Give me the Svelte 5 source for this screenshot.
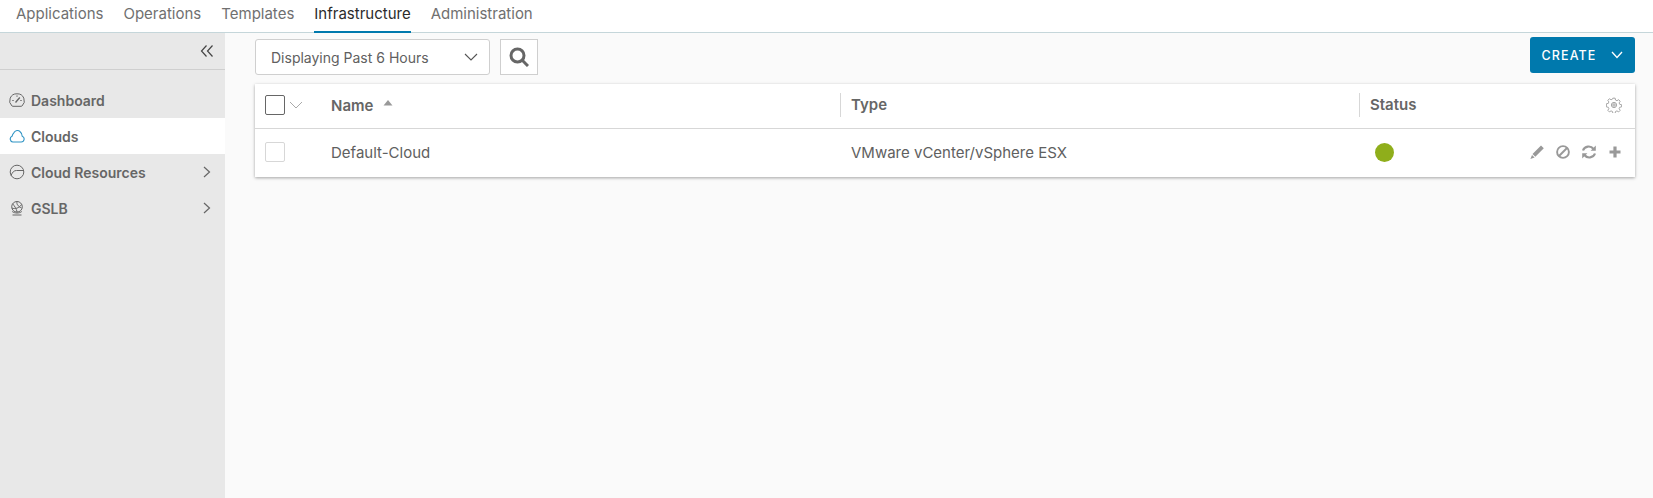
<script>
	const tabs = ['Applications', 'Operations', 'Templates', 'Infrastructure', 'Administration'];
	const active = 'Infrastructure';
</script>

<div class="page">
	<nav class="tabs">
		{#each tabs as tab}
			<span class="tab" class:active={tab === active}>{tab}</span>
		{/each}
	</nav>

	<div class="body">
		<aside class="sidebar">
			<div class="collapse">
				<svg width="14" height="14" viewBox="0 0 14 14" fill="none" stroke="#444" stroke-width="1.2">
					<path d="M6.500 1.500 1.500 7l5 5.500M12.500 1.500 7.500 7l5 5.500" />
				</svg>
			</div>
			<ul class="menu">
				<li class="item">
					<svg class="ico" width="16" height="16" viewBox="0 0 16 16" fill="none" stroke="#666" stroke-width="1">
						<path d="M3 14A7 7 0 0 1 8 1.800 7 7 0 0 1 13 14a1.500 1.500 0 0 1-1 .3H4a1.500 1.500 0 0 1-1-.3z" stroke-linejoin="round" />
						<path d="M6.500 10.500 10.800 5.500" stroke-width="1.300" />
						<path d="M8 3.400v1.400M3.300 8.500h1.400M11.300 8.500h1.400" />
					</svg>
					<span>Dashboard</span>
				</li>
				<li class="item current">
					<svg class="ico" width="16" height="16" viewBox="0 0 16 16" fill="none" stroke="#2e93c4" stroke-width="1.100">
						<path d="M3.800 14h8.400a3 3 0 0 0 1-5.800c0-2-.9-3.600-2.100-4.500a3.600 3.600 0 0 0-5.900.6C4.100 5.500 3.300 7 3 8.300A3 3 0 0 0 3.800 14z" stroke-linejoin="round" />
					</svg>
					<span>Clouds</span>
				</li>
				<li class="item">
					<svg class="ico" width="16" height="16" viewBox="0 0 16 16" fill="none" stroke="#666" stroke-width="1">
						<circle cx="8" cy="8" r="6.800" />
						<path d="M2 11.500C3.500 8 5 6.500 7.500 6.500H14.500" />
					</svg>
					<span>Cloud Resources</span>
					<svg class="more" width="10" height="12" viewBox="0 0 10 12" fill="none" stroke="#666" stroke-width="1.200">
						<path d="M2 1l5.500 5L2 11" />
					</svg>
				</li>
				<li class="item">
					<svg class="ico" width="16" height="16" viewBox="0 0 16 16" fill="none" stroke="#666" stroke-width="1">
						<circle cx="8" cy="6.800" r="5.300" />
						<path d="M3.600 3.800C5.500 6 7 8 8.200 12M3 8.200C6 9 10 8.500 12.500 4.500M8 1.500C7.500 4 8.500 6 12.500 8" />
						<path d="M3.200 11.500C5.500 13.500 10.500 13.500 12.800 11.500M3.500 15h9" />
					</svg>
					<span>GSLB</span>
					<svg class="more" width="10" height="12" viewBox="0 0 10 12" fill="none" stroke="#666" stroke-width="1.200">
						<path d="M2 1l5.500 5L2 11" />
					</svg>
				</li>
			</ul>
		</aside>

		<main class="main">
			<div class="toolbar">
				<div class="select">
					<span>Displaying Past 6 Hours</span>
					<svg width="14" height="8" viewBox="0 0 14 8" fill="none" stroke="#555" stroke-width="1.100">
						<path d="M1 1l6 6 6-6" />
					</svg>
				</div>
				<button class="search" aria-label="Search">
					<svg width="20" height="20" viewBox="0 0 20 20" fill="none" stroke="#666" stroke-width="3">
						<circle cx="8.500" cy="8.500" r="6.500" />
						<path d="M13.500 13.500l5.500 5.500" />
					</svg>
				</button>
				<button class="create">
					<span>CREATE</span>
					<svg width="12" height="8" viewBox="0 0 12 8" fill="none" stroke="#fff" stroke-width="1.300">
						<path d="M1 1l5 5.500L11 1" />
					</svg>
				</button>
			</div>

			<section class="card">
				<div class="row head">
					<div class="cell check">
						<span class="box strong"></span>
						<svg width="14" height="8" viewBox="0 0 14 8" fill="none" stroke="#aaa" stroke-width="1">
							<path d="M1 1l6 6 6-6" />
						</svg>
					</div>
					<div class="cell name">
						Name
						<svg class="sort" width="10" height="6" viewBox="0 0 10 6"><path d="M5 0l4.500 5.500H.5z" fill="#999" /></svg>
					</div>
					<div class="cell col">Type</div>
					<div class="cell col">Status</div>
					<div class="cell tools">
						<svg width="16" height="16" viewBox="0 0 16 16" fill="none" stroke="#999" stroke-width="0.900">
							<path d="M6.800 1h2.400l.4 2 1.500.7 1.800-1.100 1.600 1.700-1.100 1.700.6 1.500 2 .4v2.300l-2 .4-.6 1.500 1.100 1.700-1.600 1.700-1.800-1.100-1.500.7-.4 2H6.800l-.4-2-1.500-.7-1.800 1.100-1.600-1.700 1.100-1.700-.6-1.500-2-.4V6.900l2-.4.6-1.500L1.500 3.300l1.600-1.700 1.800 1.100 1.500-.7z" transform="translate(.4 .2) scale(.95)" stroke-linejoin="round" />
							<circle cx="8" cy="8" r="2.600" />
							<circle cx="8" cy="8" r="1.200" />
						</svg>
					</div>
				</div>
				<div class="row data">
					<div class="cell check"><span class="box"></span></div>
					<div class="cell name">Default-Cloud</div>
					<div class="cell value">VMware vCenter/vSphere ESX</div>
					<div class="cell value"><span class="dot"></span></div>
					<div class="cell actions">
						<svg width="16" height="16" viewBox="0 0 16 16">
							<path d="M12 1.500l2.800 2.800-8.500 8.500-2.800-2.800zM3 10.900l2.600 2.600-4.200 1.500z" fill="#999" />
						</svg>
						<svg width="16" height="16" viewBox="0 0 16 16" fill="none" stroke="#999" stroke-width="1.900">
							<circle cx="8" cy="8" r="5.900" />
							<path d="M4 12l8-8" />
						</svg>
						<svg width="16" height="16" viewBox="0 0 16 16" fill="none" stroke="#999" stroke-width="2.200">
							<path d="M2 6.500A6 6 0 0 1 12.500 5M14 9.500A6 6 0 0 1 3.500 11" />
							<path d="M14.800 1.500v5.200H9.600zM1.200 14.500V9.300h5.200z" fill="#999" stroke="none" />
						</svg>
						<svg width="16" height="16" viewBox="0 0 16 16"><path d="M6.400 2.500h3.200v3.900h3.900v3.200H9.600v3.900H6.400V9.600H2.500V6.400h3.900z" fill="#999" /></svg>
					</div>
				</div>
			</section>
		</main>
	</div>
</div>

<style>
	:global(body) {
		margin: 0;
		background: #fafafa;
	}

	.page {
		height: 498px;
		display: flex;
		flex-direction: column;
		font-family: Inter, 'Noto Sans', sans-serif;
		color: #565656;
		overflow: hidden;
	}

	.tabs {
		height: 32px;
		flex: none;
		display: flex;
		gap: 20px;
		padding-left: 16px;
		background: #fff;
		border-bottom: 1px solid #c5d6da;
	}

	.tab {
		font-size: 15px;
		line-height: 27px;
		color: #707070;
		height: 32px;
		box-sizing: border-box;
	}

	.tab.active {
		color: #2b2b2b;
		border-bottom: 2px solid #0079ad;
		height: 33px;
	}

	.body {
		flex: 1;
		display: flex;
		min-height: 0;
	}

	.sidebar {
		width: 225px;
		flex: none;
		background: #e8e8e8;
	}

	.collapse {
		height: 36px;
		display: flex;
		align-items: center;
		justify-content: flex-end;
		padding-right: 11px;
		border-bottom: 1px solid #cfcfcf;
	}

	.menu {
		list-style: none;
		margin: 0;
		padding: 12px 0 0;
	}

	.item {
		height: 36px;
		display: flex;
		align-items: center;
		padding: 0 13px 0 9px;
		font-size: 14px;
		font-weight: 600;
		color: #666;
	}

	.item.current {
		background: #fff;
	}

	.ico {
		margin-right: 6px;
	}

	.more {
		margin-left: auto;
	}

	.main {
		flex: 1;
		min-width: 0;
		padding: 4px 18px 0 30px;
	}

	.toolbar {
		display: flex;
		align-items: flex-start;
		height: 47px;
	}

	.select {
		width: 235px;
		height: 36px;
		margin-top: 2px;
		box-sizing: border-box;
		display: flex;
		align-items: center;
		justify-content: space-between;
		padding: 0 11px 0 15px;
		background: #fff;
		border: 1px solid #cfcfcf;
		border-radius: 3px;
		font-size: 14px;
		color: #606060;
	}

	.search {
		width: 38px;
		height: 36px;
		margin: 2px 0 0 10px;
		padding: 0;
		display: flex;
		align-items: center;
		justify-content: center;
		background: #fff;
		border: 1px solid #cfcfcf;
	}

	.create {
		width: 105px;
		height: 36px;
		margin-left: auto;
		padding: 0;
		display: flex;
		align-items: center;
		justify-content: center;
		gap: 15px;
		background: #0079ad;
		border: none;
		border-radius: 3px;
		color: #fff;
		font-family: inherit;
		font-size: 12.5px;
		font-weight: 500;
		letter-spacing: 1.100px;
	}

	.card {
		background: #fff;
		box-shadow: 0 1px 3px rgba(0, 0, 0, 0.35);
	}

	.row {
		display: grid;
		grid-template-columns: 76px 509px 519px 1fr auto;
		align-items: center;
	}

	.head {
		height: 45px;
		box-sizing: border-box;
		padding-bottom: 2px;
		border-bottom: 1px solid #d7d7d7;
		font-size: 15px;
		font-weight: 600;
		color: #666;
	}

	.data {
		height: 48px;
		padding-bottom: 2px;
		box-sizing: border-box;
		font-size: 15px;
		color: #606060;
	}

	.check {
		display: flex;
		align-items: center;
		gap: 4px;
		padding-left: 10px;
	}

	.box {
		width: 20px;
		height: 20px;
		box-sizing: border-box;
		background: #fff;
		border: 1px solid #d7d7d7;
		border-radius: 2px;
	}

	.box.strong {
		border-color: #666;
	}

	.sort {
		margin: 0 0 5px 6px;
	}

	.col {
		border-left: 1px solid #d7d7d7;
		height: 24px;
		line-height: 24px;
		padding-left: 10px;
	}

	.value {
		padding-left: 11px;
	}

	.dot {
		display: block;
		width: 19px;
		height: 19px;
		margin-left: 5px;
		border-radius: 50%;
		background: #8fae1b;
	}

	.tools {
		display: flex;
		padding-right: 13px;
	}

	.actions {
		display: flex;
		gap: 10px;
		padding-right: 12px;
	}
</style>
